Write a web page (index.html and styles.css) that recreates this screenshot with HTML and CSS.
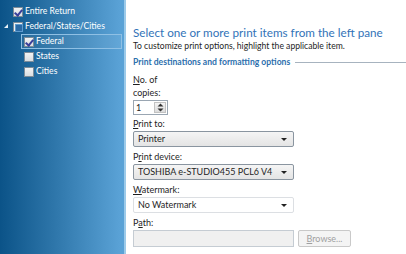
FILE: index.html
```html
<!DOCTYPE html>
<html lang="en">
<head>
    <meta charset="UTF-8">
    <title>Print</title>
    <link rel="stylesheet" href="styles.css">
</head>
<body>
    <div class="window">

        <!-- Left tree pane -->
        <div class="tree">
            <div class="tree-row">
                <span class="check checked"></span>
                <span class="label">Entire Return</span>
            </div>
            <div class="tree-row">
                <span class="expander"></span>
                <span class="check partial"></span>
                <span class="label">Federal/States/Cities</span>
            </div>
            <div class="children">
                <div class="tree-row selected">
                    <span class="check checked"></span>
                    <span class="label">Federal</span>
                </div>
                <div class="tree-row">
                    <span class="check"></span>
                    <span class="label">States</span>
                </div>
                <div class="tree-row">
                    <span class="check"></span>
                    <span class="label">Cities</span>
                </div>
            </div>
        </div>

        <!-- Right options pane -->
        <div class="options">
            <h1>Select one or more print items from the left pane</h1>
            <p class="hint">To customize print options, highlight the applicable item.</p>
            <div class="group-title"><span>Print destinations and formatting options</span></div>

            <div class="field copies">
                <label><u>N</u>o. of<br>copies:</label>
                <div class="spinner">
                    <span class="value">1</span>
                    <span class="spin-btn">
                        <svg width="7" height="9" viewBox="0 0 7 9"><path d="M3.5 0.5 L6.5 3.5 H0.5Z M3.5 8.5 L6.5 5.5 H0.5Z" fill="#333"/></svg>
                    </span>
                </div>
            </div>

            <div class="field">
                <label><u>P</u>rint to:</label>
                <div class="select">Printer<span class="arrow"></span></div>
            </div>

            <div class="field">
                <label>P<u>r</u>int device:</label>
                <div class="select">TOSHIBA e-STUDIO455 PCL6 V4<span class="arrow"></span></div>
            </div>

            <div class="field">
                <label><u>W</u>atermark:</label>
                <div class="select flat">No Watermark<span class="arrow"></span></div>
            </div>

            <div class="field">
                <label>P<u>a</u>th:</label>
                <div class="path-row">
                    <div class="path-box"></div>
                    <div class="browse"><u>B</u>rowse...</div>
                </div>
            </div>
        </div>
    </div>
</body>
</html>
```

FILE: styles.css
```css
/* General styles */
* {
    box-sizing: border-box;
    margin: 0;
    padding: 0;
}

body {
    font-family: Lato, "Noto Sans", sans-serif;
    font-size: 9px;
    color: #1e1e1e;
    background: #ffffff;
    overflow: hidden;
}

.window {
    display: flex;
    width: 406px;
    height: 254px;
}

/* Tree pane */
.tree {
    width: 126px;
    flex-shrink: 0;
    padding-top: 4px;
    background: linear-gradient(90deg, #0b5388, #2f77ab 45%, #5aa2d6 97%);
    border-right: 2px solid #9ccae9;
    color: #ffffff;
}

.tree-row {
    display: flex;
    align-items: center;
    height: 15px;
    padding-left: 13px;
    position: relative;
    white-space: nowrap;
}

.children .tree-row {
    padding-left: 24px;
}

.tree-row.selected {
    margin-left: 21px;
    margin-right: 2px;
    padding-left: 2px;
    border: 1px solid #8fc0e4;
    background: rgba(255, 255, 255, 0.06);
}

.expander {
    position: absolute;
    left: 4px;
    top: 5px;
    width: 0;
    height: 0;
    border-left: 4px solid transparent;
    border-bottom: 4px solid #e8f1f8;
}

.check {
    width: 10px;
    height: 10px;
    border: 1px solid #7d8c99;
    background: linear-gradient(#f3f3f3, #d9dde1);
    margin-right: 2px;
    position: relative;
    flex-shrink: 0;
}

.check.checked::after {
    content: "";
    position: absolute;
    left: 2px;
    top: 0;
    width: 3px;
    height: 6px;
    border-right: 2px solid #3a3f9a;
    border-bottom: 2px solid #3a3f9a;
    transform: rotate(40deg);
}

.check.partial {
    background: #eef1f4;
}

.check.partial::after {
    content: "";
    position: absolute;
    left: 1px;
    top: 1px;
    width: 6px;
    height: 6px;
    background: #2a6aa6;
    border: 1px solid #5f9ccf;
}

.label {
    font-size: 8.6px;
    line-height: 15px;
}

/* Options pane */
.options {
    flex: 1;
    padding: 24px 0 0 7px;
}

h1 {
    font-size: 11.7px;
    font-weight: normal;
    color: #3273b8;
    line-height: 16px;
    white-space: nowrap;
}

.hint {
    font-size: 8.6px;
    line-height: 13px;
    margin-bottom: 3px;
}

.group-title {
    display: flex;
    align-items: center;
    gap: 5px;
    font-size: 8.6px;
    font-weight: bold;
    color: #2d6fad;
    line-height: 13px;
    margin-bottom: 4px;
}

.group-title::after {
    content: "";
    flex: 1;
    border-top: 1px solid #a7b3bf;
}

.field {
    margin-bottom: 3px;
}

.field.copies {
    margin-bottom: 2px;
}

.field label {
    display: block;
    font-size: 9px;
    line-height: 13px;
    margin-bottom: 1px;
}

.spinner {
    display: flex;
    width: 35px;
    height: 15px;
    border: 1px solid #9aa6b2;
    background: #ffffff;
}

.spinner .value {
    flex: 1;
    padding-left: 2px;
    line-height: 13px;
}

.spin-btn {
    width: 12px;
    margin: 1px;
    display: flex;
    align-items: center;
    justify-content: center;
    background: linear-gradient(#f4f4f4, #dcdcdc);
    border: 1px solid #c2c2c2;
}

.select {
    position: relative;
    width: 161px;
    height: 16px;
    padding-left: 4px;
    line-height: 14px;
    font-size: 9px;
    white-space: nowrap;
    border: 1px solid #8a95a0;
    border-radius: 2px;
    background: linear-gradient(#f5f5f5, #e4e4e4);
}

.select.flat {
    background: #ffffff;
    border-color: #dcdfe3;
}

.arrow {
    position: absolute;
    right: 6px;
    top: 6px;
    width: 0;
    height: 0;
    border-left: 3px solid transparent;
    border-right: 3px solid transparent;
    border-top: 3px solid #222;
}

.path-row {
    display: flex;
    gap: 4px;
}

.path-box {
    width: 161px;
    height: 17px;
    border: 1px solid #c5ccd3;
    background: #f0f0f0;
}

.browse {
    width: 53px;
    height: 17px;
    border: 1px solid #c9c9c9;
    border-radius: 2px;
    background: #f4f4f4;
    color: #a0a0a0;
    text-align: center;
    line-height: 15px;
    font-size: 9px;
}
```
